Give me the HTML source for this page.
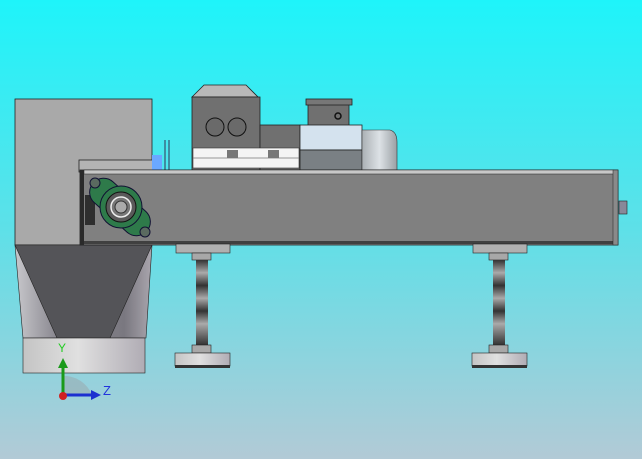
<!DOCTYPE html>
<html><head><meta charset="utf-8"><style>
html,body{margin:0;padding:0;width:642px;height:459px;overflow:hidden}
svg{display:block}
</style></head><body>
<svg width="642" height="459" viewBox="0 0 642 459" xmlns="http://www.w3.org/2000/svg">
<defs>
<linearGradient id="bg" x1="0" y1="0" x2="0" y2="1">
<stop offset="0" stop-color="#1ef4fa"/><stop offset="0.5" stop-color="#5ee0e8"/><stop offset="1" stop-color="#b2cad6"/></linearGradient>
<linearGradient id="cone" x1="0" y1="0" x2="1" y2="0">
<stop offset="0" stop-color="#c8c8cc"/><stop offset="0.3" stop-color="#8a8890"/><stop offset="0.8" stop-color="#7a7880"/><stop offset="1" stop-color="#aaa6ae"/></linearGradient>
<linearGradient id="cyl" x1="0" y1="0" x2="1" y2="0">
<stop offset="0" stop-color="#c4c4c4"/><stop offset="0.45" stop-color="#e0e0e0"/><stop offset="1" stop-color="#b0acb4"/></linearGradient>
<linearGradient id="rod" x1="0" y1="0" x2="0" y2="1">
<stop offset="0" stop-color="#333"/><stop offset="0.15" stop-color="#aaa"/><stop offset="0.3" stop-color="#333"/><stop offset="0.45" stop-color="#aaa"/><stop offset="0.6" stop-color="#333"/><stop offset="0.75" stop-color="#aaa"/><stop offset="1" stop-color="#333"/></linearGradient>
<linearGradient id="cap" x1="0" y1="0" x2="1" y2="0">
<stop offset="0" stop-color="#aab0b4"/><stop offset="0.5" stop-color="#dde2e6"/><stop offset="1" stop-color="#9aa0a4"/></linearGradient>
</defs>
<rect width="642" height="459" fill="url(#bg)"/>

<rect x="15" y="99" width="137" height="146" fill="#a9a9a9" stroke="#222" stroke-width="0.8"/>
<path d="M15 245 L152 245 L146 338 L23 338 Z" fill="url(#cone)" stroke="#222" stroke-width="0.6"/>
<path d="M15 245 L57 338 L110 338 L152 245 Z" fill="#545458" stroke="#222" stroke-width="0.6"/>
<rect x="23" y="338" width="122" height="35" fill="url(#cyl)" stroke="#222" stroke-width="0.6"/>

<rect x="79" y="160" width="77" height="12" fill="#b4b4b4" stroke="#222" stroke-width="0.8"/>
<rect x="152" y="155" width="10" height="16" fill="#6aa8ff"/>
<line x1="165" y1="140" x2="165" y2="170" stroke="#335" stroke-width="1"/>
<line x1="169" y1="140" x2="169" y2="170" stroke="#335" stroke-width="1"/>

<path d="M192 97 L204 85 L246 85 L258 97 Z" fill="#b8b8b8" stroke="#222" stroke-width="0.8"/>
<rect x="192" y="97" width="68" height="73" fill="#707070" stroke="#222" stroke-width="0.8"/>
<rect x="260" y="125" width="40" height="45" fill="#707070" stroke="#222" stroke-width="0.8"/>
<circle cx="215" cy="127" r="9" fill="#6a6a6a" stroke="#111"/>
<circle cx="237" cy="127" r="9" fill="#6a6a6a" stroke="#111"/>
<rect x="193" y="148" width="106" height="20" fill="#f4f4f4" stroke="#333" stroke-width="0.6"/>
<line x1="193" y1="158" x2="299" y2="158" stroke="#777" stroke-width="0.8"/>
<rect x="227" y="150" width="11" height="8" fill="#777"/>
<rect x="268" y="150" width="11" height="8" fill="#777"/>
<rect x="308" y="103" width="41" height="23" fill="#707070" stroke="#222" stroke-width="0.8"/>
<rect x="306" y="99" width="46" height="6" fill="#777" stroke="#222" stroke-width="0.8"/>
<circle cx="338" cy="116" r="3" fill="none" stroke="#111" stroke-width="1.5"/>
<rect x="300" y="125" width="62" height="25" fill="#d4e2ee" stroke="#222" stroke-width="0.8"/>
<rect x="300" y="150" width="62" height="20" fill="#7a8084" stroke="#222" stroke-width="0.8"/>
<path d="M362 130 L390 130 Q397 132 397 142 L397 170 L362 170 Z" fill="url(#cap)" stroke="#333" stroke-width="0.6"/>

<rect x="80" y="170" width="538" height="75" fill="#808080" stroke="#222" stroke-width="0.8"/>
<rect x="84" y="170" width="530" height="4" fill="#c8c8c8" stroke="#222" stroke-width="0.5"/>
<rect x="84" y="241" width="530" height="3" fill="#404040"/>
<rect x="80" y="170" width="4" height="75" fill="#2a2a2a"/>
<rect x="613" y="170" width="5" height="75" fill="#8a8a8a" stroke="#222" stroke-width="0.5"/>
<rect x="619" y="201" width="8" height="13" fill="#889" stroke="#222" stroke-width="0.6"/>
<rect x="85" y="195" width="10" height="30" fill="#2e2e2e"/>

<g transform="rotate(42 120 207)">
<rect x="84" y="193" width="72" height="28" rx="14" fill="#2e7a4a" stroke="#113" stroke-width="1"/>
</g>
<circle cx="95" cy="183" r="5" fill="#5a6a60" stroke="#113"/>
<circle cx="145" cy="232" r="5" fill="#5a6a60" stroke="#113"/>
<circle cx="121" cy="207" r="21" fill="#2e7a4a" stroke="#113" stroke-width="1"/>
<circle cx="121" cy="207" r="15" fill="#5a5a5a" stroke="#111"/>
<circle cx="121" cy="207" r="10" fill="#777" stroke="#eee" stroke-width="1.5"/>
<circle cx="121" cy="207" r="6" fill="#aaa" stroke="#333"/>

<g id="leg">
<rect x="176" y="244" width="54" height="9" fill="#b0b0b0" stroke="#222" stroke-width="0.6"/>
<rect x="192" y="253" width="19" height="7" fill="#a8a8a8" stroke="#222" stroke-width="0.6"/>
<rect x="196" y="260" width="12" height="85" fill="url(#rod)"/>
<rect x="192" y="345" width="19" height="8" fill="#a8a8a8" stroke="#222" stroke-width="0.6"/>
<rect x="175" y="353" width="55" height="13" fill="url(#cyl)" stroke="#222" stroke-width="0.6"/>
<rect x="175" y="365" width="55" height="3" fill="#333"/>
</g>
<use href="#leg" transform="translate(297 0)"/>

<path d="M62 395 L62 376 A30 30 0 0 1 92 395 Z" fill="#9aa6aa" opacity="0.5"/>
<line x1="63" y1="395" x2="63" y2="366" stroke="#1a9a1a" stroke-width="3"/>
<path d="M58 368 L63 358 L68 368 Z" fill="#1a9a1a"/>
<line x1="63" y1="395" x2="93" y2="395" stroke="#1c2fd0" stroke-width="3"/>
<path d="M91 390 L101 395 L91 400 Z" fill="#1c2fd0"/>
<circle cx="63" cy="396" r="4" fill="#d02020"/>
<text x="58" y="352" font-family="Liberation Sans, sans-serif" font-size="12" fill="#22cc22">Y</text>
<text x="103" y="395" font-family="Liberation Sans, sans-serif" font-size="13" fill="#2233dd">Z</text>
</svg>
</body></html>
